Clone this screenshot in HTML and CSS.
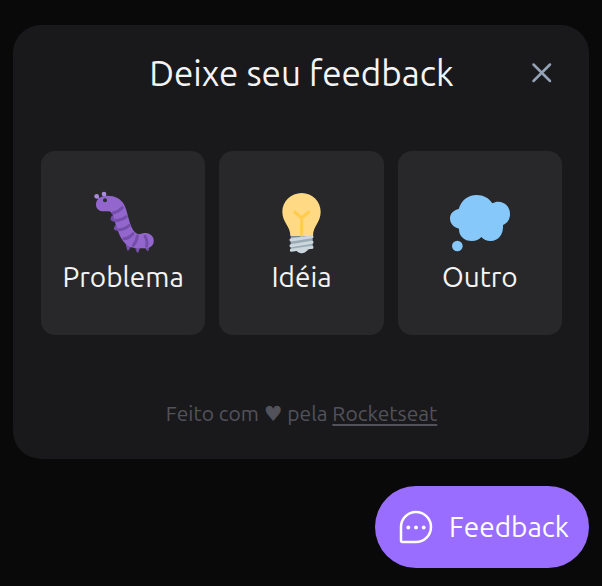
FILE: index.html
```html
<!DOCTYPE html>
<html lang="pt-BR">
<head>
<meta charset="utf-8">
<meta name="viewport" content="width=device-width, initial-scale=1">
<title>Feedback</title>
<link rel="stylesheet" href="styles.css">
</head>
<body>
<main class="widget">
  <section class="panel" aria-labelledby="panel-title">
    <header class="panel-header">
      <h1 class="panel-title" id="panel-title">Deixe seu feedback</h1>
      <button class="close" type="button" aria-label="Fechar">
        <svg viewBox="0 0 28 28" aria-hidden="true"><path d="M5.500 5.500 22 22M22 5.500 5.500 22"/></svg>
      </button>
    </header>

    <div class="options">
      <button class="option" type="button">
        <svg class="option-icon" viewBox="18 30 192 192" aria-hidden="true">
          <g fill="#744eaa">
            <path d="M80 107q-5 8-3 13 4 6 14 5l-3-18zM92 134q-7 8-6 13 5 7 15 4zM121 188l5 21q3 5 6 0l8-12zM148 197l7 19q3 5 6 0l6-18zM177 199l8 12q4 5 6 0l3-16z"/>
          </g>
          <path d="M36 49 46 61M57 42 65 55" fill="none" stroke="#9266cc" stroke-width="6"/>
          <circle cx="35" cy="49" r="7" fill="#aa8dd8"/>
          <circle cx="57" cy="42" r="7" fill="#aa8dd8"/>
          <path d="M56 94C42 94 32 85 33 71c1-15 15-24 34-24 23 0 41 9 51 28 9 18 13 49 23 69 6 12 13 18 22 19 9-4 20-6 29-2 11 5 16 15 14 26-2 12-13 18-28 18-20 0-37 0-48-7-19-12-28-34-36-59-7-22-9-37-17-43-5-3-11-2-21-2z" fill="#9266cc"/>
          <path d="M84 99q18-5 28-16M91 122q20-1 33-12M101 149q17 0 32-13M116 176q15 0 28-15M145 196q11-13 12-28M185 199q3-17-5-30" fill="none" stroke="#744eaa" stroke-width="9" stroke-linecap="round"/>
          <circle cx="60" cy="61" r="6" fill="#292f33"/>
        </svg>
        <span>Problema</span>
      </button>
      <button class="option" type="button">
        <svg class="option-icon" viewBox="12 30 192 192" aria-hidden="true">
          <path d="M110 39c32 0 57 25 57 56 0 34-23 41-23 73H76c0-32-24-39-24-73 0-31 26-56 58-56z" fill="#ffd983"/>
          <path d="M89 96l21 18 21-18M110 112v58" fill="none" stroke="#ffcc4d" stroke-width="9" stroke-linecap="round" stroke-linejoin="round"/>
          <path d="M77 169h66v38H126q-5 13-16 13t-16-13H77z" fill="#99aab5"/>
          <path d="M88 208h44l-12 9q-10 5-20 0z" fill="#ccd6dd"/>
          <path d="M78 180 141 170M78 197 141 187M79 211 141 202" fill="none" stroke="#ccd6dd" stroke-width="9" stroke-linecap="round"/>
        </svg>
        <span>Idéia</span>
      </button>
      <button class="option" type="button">
        <svg class="option-icon" viewBox="24 30 192 192" aria-hidden="true">
          <path d="M56 87C64 61 83 45 110 45c20 0 37 9 47 25 6-3 11-5 17-5 21 0 36 16 36 37 0 16-8 28-21 33 2 28-14 48-37 48-12 0-21-4-28-12-7 8-16 12-28 12-24 0-40-16-39-37-16-3-27-15-27-31 0-14 11-25 26-28z" fill="#86c8fa"/>
          <circle cx="52" cy="198" r="16" fill="#86c8fa"/>
        </svg>
        <span>Outro</span>
      </button>
    </div>

    <footer class="credits">Feito com <span class="heart">♥</span> pela <a href="https://www.rocketseat.com.br">Rocketseat</a></footer>
  </section>

  <button class="trigger" type="button">
    <svg class="trigger-icon" viewBox="0 0 34 34" aria-hidden="true">
      <path d="M17 2a15 15 0 0 1 0 30H3.500A1.500 1.500 0 0 1 2 30.500V17A15 15 0 0 1 17 2z" fill="none" stroke="currentColor" stroke-width="2.500"/>
      <g fill="currentColor"><circle cx="9.300" cy="17.500" r="1.900"/><circle cx="17" cy="17.500" r="1.900"/><circle cx="24.700" cy="17.500" r="1.900"/></g>
    </svg>
    <span>Feedback</span>
  </button>
</main>
</body>
</html>
```
FILE: styles.css
```css
* {
  box-sizing: border-box;
}

body {
  margin: 0;
  background: #090909;
  color: #f4f4f5;
  font-family: Ubuntu, "Noto Sans", "Open Sans", sans-serif;
  font-weight: 400;
}

button {
  border: 0;
  padding: 0;
  font: inherit;
  color: inherit;
  cursor: pointer;
}

.widget {
  display: flex;
  flex-direction: column;
  align-items: flex-end;
  gap: 27px;
  padding: 25px 13px 18px;
}

.panel {
  width: 100%;
  padding: 27px 27px 28px 28px;
  border-radius: 28px;
  background: #19191b;
}

.panel-header {
  display: grid;
  grid-template-columns: 40px 1fr 40px;
  align-items: center;
}

.panel-title {
  grid-column: 2;
  margin: 0;
  font-size: 35px;
  font-weight: inherit;
  line-height: 42px;
  text-align: center;
  white-space: nowrap;
}

.close {
  display: flex;
  justify-content: center;
  background: none;
  color: #94a3b8;
}

.close svg {
  width: 28px;
  height: 28px;
  fill: none;
  stroke: currentColor;
  stroke-width: 2.5;
  stroke-linecap: round;
}

.options {
  display: grid;
  grid-template-columns: repeat(3, 1fr);
  gap: 14px;
  margin: 57px 0 62px;
}

.option {
  display: flex;
  flex-direction: column;
  align-items: center;
  min-width: 0;
  padding: 39px 0 35px;
  border-radius: 14px;
  background: #28282a;
  font-size: 28px;
  line-height: 46px;
}

.option-icon {
  width: 64px;
  height: 64px;
}

.credits {
  color: #52525b;
  font-size: 21px;
  line-height: 33px;
  text-align: center;
}

.heart {
  font-family: "DejaVu Sans", sans-serif;
}

.credits a {
  color: inherit;
  text-decoration: underline;
  text-decoration-thickness: 2px;
  text-underline-offset: 3px;
}

.trigger {
  display: flex;
  align-items: center;
  gap: 16px;
  padding: 20px 20px 20px 24px;
  border-radius: 41px;
  background: #996dff;
  color: #ffffff;
  font-size: 28px;
  line-height: 42px;
}

.trigger-icon {
  width: 34px;
  height: 34px;
}
```
